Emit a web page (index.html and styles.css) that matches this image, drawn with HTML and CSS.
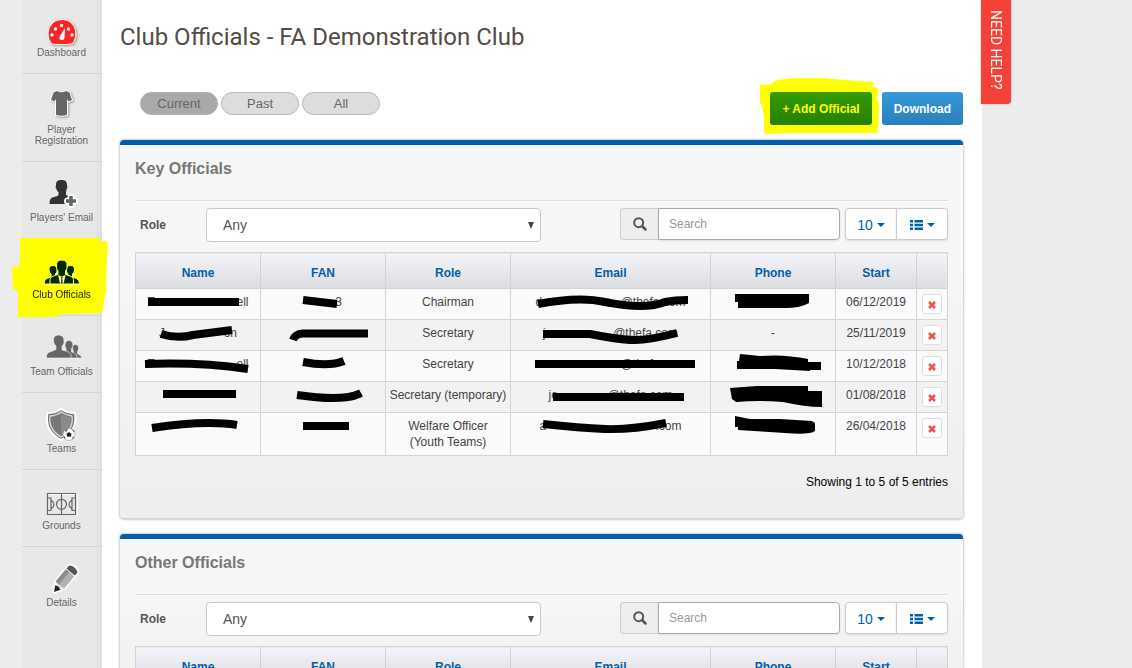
FILE: index.html
```html
<!DOCTYPE html>
<html lang="en">
<head>
<meta charset="utf-8">
<title>Club Officials - FA Demonstration Club</title>
<link rel="stylesheet" href="styles.css">
</head>
<body>
<div class="shell">
  <nav class="sidebar" aria-label="Club">
    <a class="nav-item" href="#">
      <svg class="nav-icon" viewBox="0 0 44 36" aria-hidden="true">
        <path class="halo" d="M11.500 32C6 25 8 9 22 9S38 25 32.500 32C31 33.500 13 33.500 11.500 32Z" fill="#ff2424"/>
        <g fill="#fff"><circle cx="12" cy="24" r="1.700"/><circle cx="15.500" cy="18" r="1.700"/><circle cx="21.500" cy="14.500" r="1.700"/><circle cx="28.500" cy="18" r="1.700"/><circle cx="32" cy="24" r="1.700"/><path d="M25 17L24.500 27A2.500 2.500 0 1 1 19.500 26Z"/></g>
      </svg>
      <span class="nav-label">Dashboard</span>
    </a>
    <a class="nav-item" href="#">
      <svg class="nav-icon" viewBox="0 0 44 36" aria-hidden="true">
        <path class="halo" d="M17 3Q21.500 5.500 26 3L29.500 4.500L32 12L28.500 13.500L27 11V27Q22 28.500 16 27V11L14.500 13.500L11 12L13.500 4.500Z" fill="#666"/>
      </svg>
      <span class="nav-label">Player<br>Registration</span>
    </a>
    <a class="nav-item" href="#">
      <svg class="nav-icon" viewBox="0 0 44 36" aria-hidden="true">
        <path fill="#303234" d="M16 9C16 5 18 4 21.500 4S27 5 27 9.500Q28 10 27 12.500Q26.500 13 26 16V19Q32 21 32 24V28H9.500Q9 22 14 21Q18.500 20 18.500 18.500V16Q16.500 15 16.500 13Q15 12 16 9Z"/>
        <path stroke="#fff" stroke-width="7" stroke-linecap="round" d="M31 21.500V28.500M27.500 25H34.500"/><path stroke="#5d6860" stroke-width="3.500" d="M31 20V30M26 25H36"/>
      </svg>
      <span class="nav-label">Players' Email</span>
    </a>
    <a class="nav-item current" href="#" aria-current="page">
      <svg class="nav-marker" viewBox="0 0 96 80" aria-hidden="true"><path fill="#ff0" d="M8 1L88 1V4L96 5L95 21L94 53L90 76L48 77V79L33 80L6 80V55L1 52L0 30H6L8 25Z"/></svg>
      <svg class="nav-icon" viewBox="0 0 44 36" aria-hidden="true">
        <g fill="#022b02" stroke="#ffff70" stroke-width="1">
        <path d="M9 17Q8.500 12.500 13 12.500T17 17Q17.500 19 15.500 21V24L19 26V31H4Q4 26.500 7 25.500L11 24V21Q9 19.500 9 17Z"/>
        <path d="M34.500 17Q35 12.500 30.500 12.500T26.500 17Q26 19 28 21V24L24.500 26V31H39.500Q39.500 26.500 36.500 25.500L32.500 24V21Q34.500 19.500 34.500 17Z"/>
        <path d="M16.500 13Q16 7 21.800 7T27 13Q27.500 16 25.500 18V21.500Q33.500 23.500 33.500 26.500V31H10V26.500Q10 23.500 18 21.500V18Q16 16 16.500 13Z"/></g>
        <path fill="#ffffa0" d="M18 22L20 30.500H21L21.400 25L20.600 23.500H23L22.200 25L22.600 30.500H23.600L25.600 22L23 23H20.500Z"/>
      </svg>
      <span class="nav-label">Club Officials</span>
    </a>
    <a class="nav-item" href="#">
      <svg class="nav-icon" viewBox="0 0 44 36" aria-hidden="true">
        <g fill="#666" stroke="#f3f3f3" stroke-width=".6">
        <path d="M32.500 19Q32 14.500 35.500 14.500T38.500 19L37.500 22V24Q42 25 41.500 28H31V24L33.500 22Z"/>
        <path d="M25 16Q25 10.500 29 10.500T33 16L31.500 19V22Q37 23 37 28H23V22L26.500 20Z"/>
        <path d="M13.500 11Q13 5 18.500 5T24 11Q24.500 14 22 16V20Q31 22 31 25V28H6.500Q6 23 10 22L16 19.500V16Q13.500 14 13.500 11Z"/></g>
      </svg>
      <span class="nav-label">Team Officials</span>
    </a>
    <a class="nav-item" href="#">
      <svg class="nav-icon" viewBox="0 0 44 36" aria-hidden="true">
        <path d="M21 2Q27 6 35 6Q38 24 21 33Q4 24 7.500 6Q16 6 21 2Z" fill="#777" stroke="#fff" stroke-width="2"/>
        <path d="M21 5Q26 8.500 32 9Q34 22 21 30Q8 22 10 9Q17 8.500 21 5Z" fill="#777" stroke="#ddd" stroke-width="1.300"/>
        <path d="M21 7Q25 10 30.500 10.500Q32 21 21 28Z" fill="#8a8a8a"/>
        <circle cx="29" cy="27.500" r="6" fill="#fff" stroke="#888" stroke-width=".5"/>
        <path fill="#222" d="M29 25L31.700 26.900L30.700 29.800H27.300L26.300 26.900ZM25 23.500L28 21.800L26 25ZM34 25L31.500 22L34.500 24ZM23.500 28L25.500 31.500L24 31ZM34.500 29.500L31.500 33L33 30Z"/>
      </svg>
      <span class="nav-label">Teams</span>
    </a>
    <a class="nav-item" href="#">
      <svg class="nav-icon" viewBox="0 0 44 36" aria-hidden="true">
        <path fill="none" stroke="#fff" d="M8.500 10.500H37.500V32"/>
        <g fill="none" stroke="#666" stroke-width="1.200"><path d="M7.500 9.500H35.500V30.500H7.500ZM21.500 9.500V30.500M7.500 14H11V26.500H7.500M35.500 14H32V26.500H35.500M11 16Q17 20.500 11 25M32 16Q26 20.500 32 25"/><circle cx="21.500" cy="20.300" r="5"/></g>
      </svg>
      <span class="nav-label">Grounds</span>
    </a>
    <a class="nav-item" href="#">
      <svg class="nav-icon" viewBox="0 0 44 36" aria-hidden="true">
        <g transform="translate(14 31) rotate(40)">
          <path d="M0 0L-5.500 -9V-30Q0 -35 5.500 -30V-9Z" fill="#ddd" stroke="#fff" stroke-width="3" stroke-linejoin="round"/>
          <path d="M-5.500 -9V-25H5.500V-9Z" fill="#b2b2b2"/><path d="M-5.500 -9V-25H-1V-9Z" fill="#8c8c8c"/>
          <path d="M-5.500 -26V-30Q0 -34 5.500 -30V-26Z" fill="#555"/>
          <path d="M0 0L-3.500 -6L0 -7L3.500 -6Z" fill="#222"/>
        </g>
      </svg>
      <span class="nav-label">Details</span>
    </a>
  </nav>

  <main class="content">
    <h1 class="page-title">Club Officials - FA Demonstration Club</h1>
    <div class="toolbar">
      <div class="pills">
        <button class="pill active" type="button">Current</button>
        <button class="pill" type="button">Past</button>
        <button class="pill" type="button">All</button>
      </div>
      <div class="actions">
        <span class="marked">
          <button class="btn btn-add" type="button">+ Add Official</button>
          <svg class="btn-marker" viewBox="0 0 119 56" aria-hidden="true"><path fill="#ff0" d="M0 7L10 6L18 2L33 0H62L85 2L113 4V9L118 10V19H116L119 27L118 52L117 55H28L5 56L4 54V40L2 27L0 25Z"/></svg>
        </span>
        <button class="btn btn-download" type="button">Download</button>
      </div>
    </div>

    <section class="panel">
      <h2 class="panel-title">Key Officials</h2>
      <div class="filters">
        <label class="filter-label" for="role-key">Role</label>
        <select class="role-select" id="role-key"><option>Any</option></select>
        <div class="search">
          <label class="search-addon" for="search-key" aria-label="Search"><svg viewBox="0 0 14 14" width="14" height="14" aria-hidden="true"><circle cx="5.700" cy="5.700" r="4.500" fill="none" stroke="#555" stroke-width="2"/><path d="M9 9L12.500 12.500" stroke="#555" stroke-width="2.500" stroke-linecap="round"/></svg></label>
          <input class="search-input" id="search-key" type="text" placeholder="Search">
        </div>
        <div class="button-group">
          <button class="tool" type="button">10 <span class="caret"></span></button>
          <button class="tool" type="button" aria-label="Columns"><svg viewBox="0 0 13 10" width="13" height="10" aria-hidden="true"><path fill="#005eaa" d="M0 0H3V2.500H0ZM4.500 0H13V2.500H4.500ZM0 3.700H3V6.200H0ZM4.500 3.700H13V6.200H4.500ZM0 7.400H3V10H0ZM4.500 7.400H13V10H4.500Z"/></svg><span class="caret"></span></button>
        </div>
      </div>
      <div class="table-wrap">
        <table class="officials">
          <colgroup><col class="c-name"><col class="c-fan"><col class="c-role"><col class="c-email"><col class="c-phone"><col class="c-start"><col class="c-del"></colgroup>
          <thead><tr><th>Name</th><th>FAN</th><th>Role</th><th>Email</th><th>Phone</th><th>Start</th><th></th></tr></thead>
          <tbody>
            <tr><td><span class="masked m-name"><span>T</span><span>ell</span></span></td><td><span class="masked m-fan"><span></span><span>3</span></span></td><td>Chairman</td><td><span class="masked m-email"><span>d</span><span>@thefa.com</span></span></td><td></td><td>06/12/2019</td><td><button class="delete" type="button" aria-label="Delete"><svg viewBox="0 0 8 8" width="8" height="8"><path d="M1 1L7 7M7 1L1 7"/></svg></button></td></tr>
            <tr><td><span class="masked m-short"><span>J</span><span>on</span></span></td><td></td><td>Secretary</td><td><span class="masked m-mid"><span>j</span><span>@thefa.com</span></span></td><td>-</td><td>25/11/2019</td><td><button class="delete" type="button" aria-label="Delete"><svg viewBox="0 0 8 8" width="8" height="8"><path d="M1 1L7 7M7 1L1 7"/></svg></button></td></tr>
            <tr><td><span class="masked m-name"><span>T</span><span>ell</span></span></td><td></td><td>Secretary</td><td><span class="masked m-email"><span></span><span>@thefa.com</span></span></td><td></td><td>10/12/2018</td><td><button class="delete" type="button" aria-label="Delete"><svg viewBox="0 0 8 8" width="8" height="8"><path d="M1 1L7 7M7 1L1 7"/></svg></button></td></tr>
            <tr><td></td><td></td><td>Secretary (temporary)</td><td><span class="masked m-low"><span>je</span><span>@thefa.com</span></span></td><td></td><td>01/08/2018</td><td><button class="delete" type="button" aria-label="Delete"><svg viewBox="0 0 8 8" width="8" height="8"><path d="M1 1L7 7M7 1L1 7"/></svg></button></td></tr>
            <tr><td></td><td></td><td>Welfare Officer<br>(Youth Teams)</td><td><span class="masked m-last"><span>a</span><span>.com</span></span></td><td></td><td>26/04/2018</td><td><button class="delete" type="button" aria-label="Delete"><svg viewBox="0 0 8 8" width="8" height="8"><path d="M1 1L7 7M7 1L1 7"/></svg></button></td></tr>
          </tbody>
        </table>
        <svg class="redactions" viewBox="0 0 813 204" preserveAspectRatio="none" aria-hidden="true">
          <g fill="none" stroke="#000" stroke-width="8">
            <path d="M13 50H104"/><path d="M26 82Q42 87 58 83L97 78"/><path d="M10 112Q65 110 113 117"/><path d="M28 142H101"/><path d="M17 176Q70 168 102 173"/>
            <path d="M168 48L202 52"/><path d="M158 88Q160 82 168 81.500H233"/><path d="M168 110Q194 115 209 109"/><path d="M162 143Q210 150 226 141"/><path d="M168 174H214"/>
            <path d="M403 52Q444 44 470 50Q510 58 530 50Q540 48 553 48"/><path d="M408 82H455Q485 88 500 88T542 81"/><path d="M400 112H560"/><path d="M418 145H549"/><path d="M408 172Q445 176 470 177T531 171"/>
          </g>
          <path d="M600 42H674V51Q666 56 650 56H603V50H600ZM605 102L625 104Q650 102 673 107V110H686V118H675V119L640 117H602V109H604ZM595 136L622 134H673V139H687V155Q670 155 648 150Q625 148 601 150L597 147ZM600 164L615 167H645L677 169L680 171V179Q675 183 650 181L603 178V175H600Z"/>
        </svg>
      </div>
      <p class="summary">Showing 1 to 5 of 5 entries</p>
    </section>

    <section class="panel">
      <h2 class="panel-title">Other Officials</h2>
      <div class="filters">
        <label class="filter-label" for="role-other">Role</label>
        <select class="role-select" id="role-other"><option>Any</option></select>
        <div class="search">
          <label class="search-addon" for="search-other" aria-label="Search"><svg viewBox="0 0 14 14" width="14" height="14" aria-hidden="true"><circle cx="5.700" cy="5.700" r="4.500" fill="none" stroke="#555" stroke-width="2"/><path d="M9 9L12.500 12.500" stroke="#555" stroke-width="2.500" stroke-linecap="round"/></svg></label>
          <input class="search-input" id="search-other" type="text" placeholder="Search">
        </div>
        <div class="button-group">
          <button class="tool" type="button">10 <span class="caret"></span></button>
          <button class="tool" type="button" aria-label="Columns"><svg viewBox="0 0 13 10" width="13" height="10" aria-hidden="true"><path fill="#005eaa" d="M0 0H3V2.500H0ZM4.500 0H13V2.500H4.500ZM0 3.700H3V6.200H0ZM4.500 3.700H13V6.200H4.500ZM0 7.400H3V10H0ZM4.500 7.400H13V10H4.500Z"/></svg><span class="caret"></span></button>
        </div>
      </div>
      <table class="officials">
        <colgroup><col class="c-name"><col class="c-fan"><col class="c-role"><col class="c-email"><col class="c-phone"><col class="c-start"><col class="c-del"></colgroup>
        <thead><tr><th>Name</th><th>FAN</th><th>Role</th><th>Email</th><th>Phone</th><th>Start</th><th></th></tr></thead>
      </table>
    </section>
  </main>

  <aside class="help"><button class="help-tab" type="button">NEED HELP?</button></aside>
</div>
</body>
</html>
```
FILE: styles.css
```css
* { box-sizing: border-box; }

body {
  margin: 0;
  background: #ececec;
  color: #444;
  font: 12px/16px "Liberation Sans", Arial, sans-serif;
}

button, input, select { font: inherit; }

.shell {
  display: grid;
  grid-template-columns: 80px minmax(0, 1fr) 150px;
  height: 100vh;
  padding-left: 22px;
}

/* Sidebar */
.sidebar {
  background: linear-gradient(90deg, #e8e8e8 90%, #dfdfdf);
}

.nav-item {
  position: relative;
  display: flex;
  flex-direction: column;
  align-items: center;
  padding: 14px 1px 15px 0;
  border-bottom: 1px solid #d5d5d5;
  color: #666;
  font-size: 10px;
  line-height: 11px;
  text-align: center;
  text-decoration: none;
}

.nav-item:first-child { padding-top: 11px; }
.nav-item:last-child { border-bottom: 0; }
.nav-item.current { color: #222200; }

.nav-icon { width: 44px; height: 36px; }
.halo { stroke: #fff; stroke-width: 2; paint-order: stroke; filter: drop-shadow(1px 1px 1px #999); }

.nav-marker {
  position: absolute;
  z-index: 1;
  left: -10px;
  top: -2px;
  width: 96px;
  height: 80px;
  pointer-events: none;
}

.current .nav-icon, .current .nav-label { position: relative; z-index: 2; }

/* Main column */
.content {
  padding: 22px 19px 22px 18px;
  overflow-y: auto;
  scrollbar-width: none;
  background: #fff;
}

.page-title {
  margin: 0 0 40px;
  color: #534b45;
  font: 400 24px/30px Roboto, sans-serif;
}

.toolbar {
  display: flex;
  align-items: flex-start;
  justify-content: space-between;
  margin-bottom: 15px;
  padding-left: 20px;
}

.pills { display: flex; gap: 3px; }

.pill {
  width: 78px;
  height: 23px;
  padding: 0;
  border: 1px solid #b9b9b9;
  border-radius: 12px;
  background: #ddd;
  color: #666;
  font-size: 13px;
}

.pill.active { border-color: #b0b0b0; background: #a9a9a9; }

.actions { display: flex; gap: 10px; }
.marked { position: relative; display: flex; }

.btn {
  height: 33px;
  padding: 0 12px;
  border: 0;
  border-radius: 3px;
  color: #fff;
  font-weight: bold;
}

.btn-add { background: linear-gradient(#359b00, #268000); }
.btn-download { background: linear-gradient(#3498db, #2980b9); }

.btn-marker {
  position: absolute;
  left: -10px;
  top: -14px;
  width: 119px;
  height: 56px;
  mix-blend-mode: multiply;
  pointer-events: none;
}

/* Panels */
.panel {
  margin-bottom: 15px;
  padding: 0 15px 28px;
  border-top: 5px solid #005eaa;
  border-bottom: 1px solid #d5d5d5;
  border-radius: 4px;
  background: linear-gradient(#f6f6f6 35%, #eee);
  box-shadow: 0 0 2px 1px #ccc;
}

.panel-title {
  margin: 0 0 7px;
  padding: 14px 0 21px;
  border-bottom: 1px solid #e0e0e0;
  box-shadow: 0 1px #fff;
  color: #777;
  font-size: 16px;
  line-height: 20px;
}

.filters {
  display: flex;
  align-items: flex-start;
  margin-bottom: 10px;
  padding-left: 5px;
}

.filter-label {
  width: 66px;
  line-height: 34px;
  font-weight: bold;
  color: #555;
}

.role-select {
  width: 335px;
  height: 34px;
  padding: 0 12px;
  border: 1px solid #c8c8c8;
  border-radius: 4px;
  background: #fff url("data:image/svg+xml,%3Csvg xmlns='http://www.w3.org/2000/svg' width='6' height='7'%3E%3Cpath d='M0 0H6L3 7Z' fill='%23444'/%3E%3C/svg%3E") no-repeat right 6px center;
  appearance: none;
  color: #555;
  font-size: 14px;
  text-indent: 4px;
}

.search { display: flex; margin: 0 5px 0 auto; }

.search-addon {
  display: flex;
  align-items: center;
  justify-content: center;
  width: 38px;
  height: 32px;
  border: 1px solid #ccc;
  border-right: 0;
  border-radius: 4px 0 0 4px;
  background: #eee;
}

.search-input {
  width: 182px;
  height: 32px;
  padding: 0 10px;
  border: 1px solid #aaa;
  border-radius: 0 4px 4px 0;
  background: #fff;
  box-shadow: 0 1px 2px #ddd;
}

.search-input::placeholder { color: #999; opacity: 1; }

.button-group { display: flex; }

.tool {
  display: flex;
  align-items: center;
  justify-content: center;
  gap: 4px;
  width: 52px;
  height: 32px;
  padding: 2px 0 0;
  border: 1px solid #ccc;
  border-radius: 4px 0 0 4px;
  background: #fff;
  box-shadow: 0 1px 2px #ddd;
  color: #005eaa;
  font-size: 14px;
}

.tool + .tool { margin-left: -1px; border-radius: 0 4px 4px 0; }

.caret {
  border: 4px solid transparent;
  border-top-color: #005eaa;
  border-bottom: 0;
}

/* Table */
.table-wrap { position: relative; }

.officials {
  width: 100%;
  border-collapse: collapse;
  table-layout: fixed;
  text-align: center;
}

.c-name, .c-fan, .c-role, .c-phone { width: 125px; }
.c-start { width: 81px; }
.c-del { width: 31px; }

.officials th {
  height: 36px;
  padding: 4px 0 0;
  border: 1px solid #d2d3d6;
  background: linear-gradient(#f3f4f9, #dcdde1);
  color: #005eaa;
}

.officials td {
  height: 31px;
  padding: 5px 0;
  border: 1px solid #d4d4d4;
  background: #fafafa;
  vertical-align: top;
}

.officials tr:nth-child(even) td { background: #f2f2f2; }

.masked { display: inline-flex; justify-content: space-between; vertical-align: top; }
.m-name { width: 101px; }
.m-short { width: 78px; }
.m-fan { width: 38px; }
.m-email { width: 150px; }
.m-mid { width: 135px; }
.m-low { width: 124px; }
.m-last { width: 142px; }

.redactions {
  position: absolute;
  inset: 0;
  width: 100%;
  height: 100%;
  pointer-events: none;
}

.delete {
  display: flex;
  align-items: center;
  justify-content: center;
  width: 20px;
  height: 20px;
  margin: 0 auto;
  padding: 2px 0 0;
  border: 1px solid #ddd;
  border-radius: 3px;
  background: #fff;
}

.delete path { stroke: #f05050; stroke-width: 2.500; }

.summary {
  margin: 18px 0 0;
  color: #000;
  text-align: right;
}

/* Help tab */
.help { position: relative; z-index: 1; margin-left: -1px; }

.help-tab {
  display: block;
  width: 30px;
  padding: 10px 0 14px;
  border: 0;
  border-radius: 0 0 4px 0;
  background: #f44336;
  box-shadow: 0 0 2px #999;
  color: #fff;
  font: 14px/26px Roboto, sans-serif;
  writing-mode: vertical-rl;
}
```
